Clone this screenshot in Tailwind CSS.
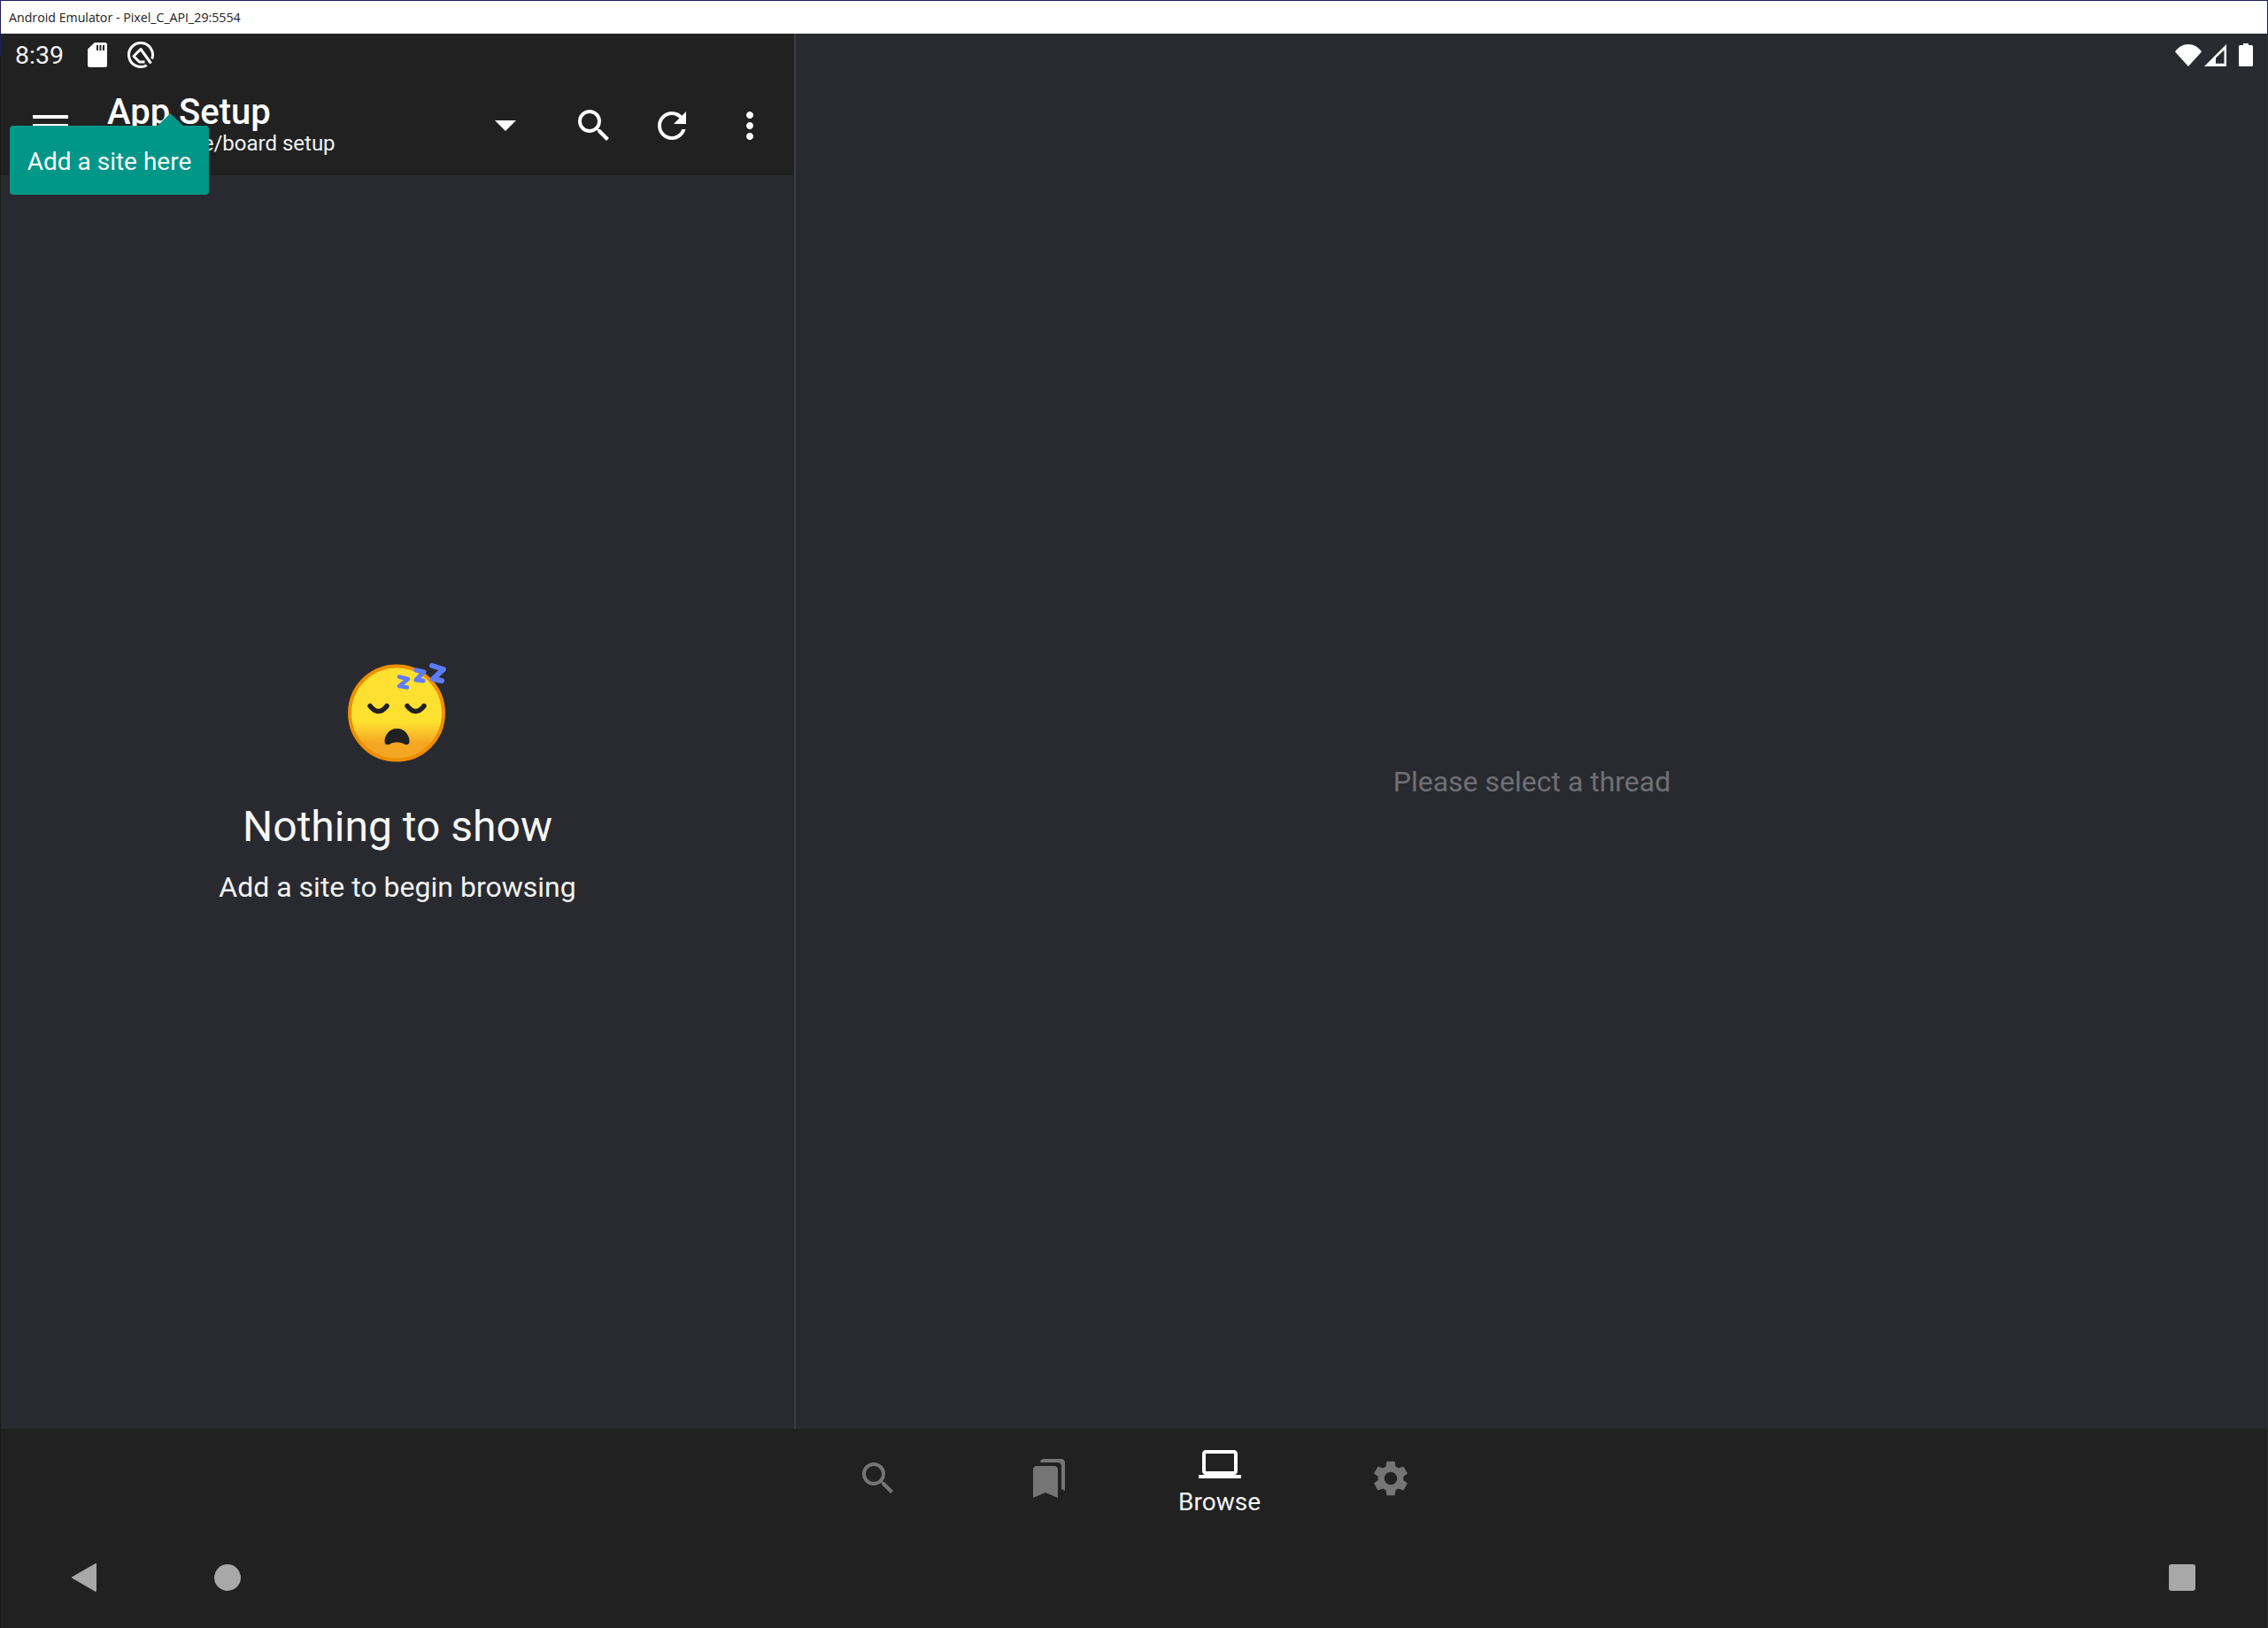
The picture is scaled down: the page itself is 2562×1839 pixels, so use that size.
<!DOCTYPE html>
<html>
<head>
<meta charset="utf-8">
<script src="https://cdn.jsdelivr.net/npm/@tailwindcss/browser@4"></script>
</head>
<body class="bg-[#292a2f] font-['Roboto',sans-serif] text-white">
<div class="relative flex h-[1839px] w-[2562px] flex-col overflow-hidden">
  <div class="flex h-[38px] shrink-0 items-center border-x border-t border-[#1f1f5c] bg-white pl-[9px] font-['Open_Sans',sans-serif] text-[14.2px] text-[#222]">Android Emulator - Pixel_C_API_29:5554</div>
  <div class="flex min-h-0 flex-1">
    <section class="flex w-[899px] shrink-0 flex-col border-r-2 border-[#3c3d41]">
      <div class="flex h-[160px] flex-col bg-[#212121]">
        <div class="flex h-[48px] items-center pl-[17px]">
          <span class="mt-[2px] w-[82px] text-[28.5px] leading-none text-[#f4f4f4]">8:39</span>
          <svg class="h-[28px] w-[22px]" viewBox="0 0 22 28"><path fill="#fff" d="M8 0h11.5A2.5 2.5 0 0 1 22 2.500V25.500A2.500 2.500 0 0 1 19.500 28H2.500A2.500 2.500 0 0 1 0 25.500V7.500zM10 3v6h2V3zm3.500 0v6h2V3zm3.500 0v6h2V3z"/></svg>
          <svg class="ml-[22px] h-[32px] w-[32px]" viewBox="0 0 32 32"><g fill="none" stroke="#fff" stroke-width="3"><path d="M22.750 27.700A13.500 13.500 0 1 1 28.700 20.600"/><path stroke-linejoin="round" d="M27.500 25.500L16 9.500L8 17.500L14.500 24H20.500"/></g></svg>
        </div>
        <div class="flex h-[112px] items-center">
          <div class="ml-[37px] flex w-[84px] flex-col gap-[6px]">
            <div class="h-[4px] w-[40px] bg-white"></div>
            <div class="h-[4px] w-[40px] bg-white"></div>
            <div class="h-[4px] w-[40px] bg-white"></div>
          </div>
          <div class="w-[438px] pb-[3px]">
            <div class="text-[40px] font-medium leading-[46px] -mt-[1px]">App Setup</div>
            <div class="-mt-[3px] text-[24px] leading-[30px] text-[#f2f2f2]">Tap for site/board setup</div>
          </div>
          <svg class="h-[12px] w-[24px]" viewBox="0 0 24 12"><path fill="#fff" d="M0 0h24L12 12z"/></svg>
          <svg class="ml-[64px] h-[48px] w-[48px]" viewBox="0 0 24 24"><path fill="#fff" d="M15.500 14h-.79l-.28-.27A6.471 6.471 0 0 0 16 9.500 6.500 6.500 0 1 0 9.500 16c1.610 0 3.090-.59 4.230-1.570l.27.28v.79l5 4.990L20.490 19l-4.990-5zm-6 0C7.010 14 5 11.990 5 9.500S7.010 5 9.500 5 14 7.010 14 9.500 11.990 14 9.500 14z"/></svg>
          <svg class="ml-[40px] h-[48px] w-[48px]" viewBox="0 0 24 24"><path fill="#fff" d="M17.650 6.350C16.200 4.900 14.210 4 12 4c-4.420 0-7.990 3.580-7.990 8s3.570 8 7.990 8c3.730 0 6.840-2.550 7.730-6h-2.080c-.82 2.330-3.040 4-5.650 4-3.310 0-6-2.690-6-6s2.690-6 6-6c1.660 0 3.140.69 4.220 1.780L13 11h7V4l-2.350 2.350z"/></svg>
          <svg class="ml-[40px] h-[48px] w-[48px]" viewBox="0 0 24 24"><path fill="#fff" d="M12 8c1.100 0 2-.9 2-2s-.9-2-2-2-2 .9-2 2 .9 2 2 2zm0 2c-1.100 0-2 .9-2 2s.9 2 2 2 2-.9 2-2-.9-2-2-2zm0 6c-1.100 0-2 .9-2 2s.9 2 2 2 2-.9 2-2-.9-2-2-2z"/></svg>
        </div>
      </div>
      <div class="flex flex-1 flex-col items-center pl-[1px] pt-[551px]">
        <svg class="h-[114px] w-[120px]" viewBox="0 0 120 114">
          <defs><linearGradient id="face" x1="0" y1="0" x2="0" y2="1"><stop offset="0.6" stop-color="#fde030"/><stop offset="0.82" stop-color="#f5a623"/></linearGradient></defs>
          <circle cx="59" cy="56.500" r="53" fill="url(#face)" stroke="#ef8f00" stroke-width="4"/>
          <g fill="none" stroke="#202020" stroke-width="5.500" stroke-linecap="round">
            <path d="M29 48.500q9.500 12 19 0"/><path d="M71 48.500q9.500 12 19 0"/>
          </g>
          <path fill="#202020" d="M59.500 74c9 0 14 8 14 14 0 5-4 5-7 3-4-2-10-2-14 0-3 2-7 2-7-3 0-6 5-14 14-14z"/>
          <g fill="none" stroke="#5c7cfa" stroke-linecap="round" stroke-linejoin="round">
            <path stroke-width="4.500" d="M62 15.500l10 2.500-10 8 9 1.500"/>
            <path stroke-width="5" d="M81 8l9 2-9 9 8 1"/>
            <path stroke-width="6" d="M99 3l13 4-12 11 10 2"/>
          </g>
        </svg>
        <div class="mt-[43px] text-[48px] leading-[56px] text-[#f6f6f6]">Nothing to show</div>
        <div class="mt-[21px] text-[32px] leading-[38px] text-[#f2f2f2]">Add a site to begin browsing</div>
      </div>
    </section>
    <section class="flex flex-1 flex-col">
      <div class="flex h-[48px] items-center justify-end pr-[17px]">
        <svg class="h-[25px] w-[30px]" viewBox="0 0 30 25"><path fill="#fff" d="M15 25L0 8.500C3.500 3.200 9 0 15 0s11.500 3.200 15 8.500z"/></svg>
        <svg class="ml-[3px] h-[25px] w-[25px]" viewBox="0 0 25 25"><path fill="#fff" fill-rule="evenodd" d="M25 0v25H0zM22.500 6.500L13 15.500V21.700h9.500z"/></svg>
        <svg class="ml-[14px] h-[26px] w-[16px]" viewBox="0 0 16 26"><path fill="#fff" d="M5 0h6v2h3.500A1.500 1.500 0 0 1 16 3.500v21a1.500 1.500 0 0 1-1.500 1.500h-13A1.500 1.500 0 0 1 0 24.500v-21A1.500 1.500 0 0 1 1.500 2H5z"/></svg>
      </div>
      <div class="flex flex-1 items-center justify-center pt-[66px] text-[32px] text-[#6f7075]">Please select a thread</div>
    </section>
  </div>
  <div class="flex h-[225px] shrink-0 flex-col bg-[#212121]">
    <nav class="flex h-[124px] justify-center">
      <div class="flex w-[193px] justify-center pt-[32px]"><svg class="h-[48px] w-[48px]" viewBox="0 0 24 24"><path fill="#757575" d="M15.500 14h-.79l-.28-.27A6.471 6.471 0 0 0 16 9.500 6.500 6.500 0 1 0 9.500 16c1.610 0 3.090-.59 4.230-1.570l.27.28v.79l5 4.990L20.490 19l-4.990-5zm-6 0C7.010 14 5 11.990 5 9.500S7.010 5 9.500 5 14 7.010 14 9.500 11.990 14 9.500 14z"/></svg></div>
      <div class="flex w-[193px] justify-center pt-[32px]"><svg class="h-[48px] w-[48px]" viewBox="0 0 24 24"><path fill="#757575" d="M19 18l2 1V3c0-1.100-.9-2-2-2H8.990C7.890 1 7 1.900 7 3h10c1.100 0 2 .9 2 2v13zM15 5H5c-1.100 0-2 .9-2 2v16l7-3 7 3V7c0-1.100-.9-2-2-2z"/></svg></div>
      <div class="flex w-[193px] flex-col items-center pt-[16px]">
        <svg class="h-[48px] w-[48px]" viewBox="0 0 24 24"><path fill="#fff" d="M20 18c1.100 0 1.990-.9 1.990-2L22 6c0-1.100-.9-2-2-2H4c-1.100 0-2 .9-2 2v10c0 1.100.9 2 2 2H0v2h24v-2h-4zM4 6h16v10H4V6z"/></svg>
        <span class="mt-[3px] text-[28px] leading-[32px] text-[#f5f5f5]">Browse</span>
      </div>
      <div class="flex w-[193px] justify-center pt-[32px]"><svg class="h-[48px] w-[48px]" viewBox="0 0 24 24"><path fill="#757575" d="M19.140 12.940c.04-.3.060-.61.060-.94 0-.32-.02-.64-.07-.94l2.030-1.580a.49.49 0 0 0 .12-.61l-1.920-3.320a.488.488 0 0 0-.59-.22l-2.390.96c-.5-.38-1.030-.7-1.620-.94l-.36-2.540a.484.484 0 0 0-.48-.41h-3.840c-.24 0-.43.170-.47.410l-.36 2.540c-.59.240-1.130.570-1.620.94l-2.390-.96c-.22-.08-.47 0-.59.220L2.740 8.870c-.12.210-.08.470.12.610l2.030 1.580c-.05.300-.09.630-.09.940s.02.640.07.940l-2.030 1.580a.49.49 0 0 0-.12.610l1.920 3.320c.12.220.37.290.59.220l2.390-.96c.5.380 1.030.7 1.620.94l.36 2.540c.05.240.24.410.48.410h3.840c.24 0 .44-.17.47-.41l.36-2.540c.59-.24 1.130-.56 1.620-.94l2.390.96c.22.080.47 0 .59-.22l1.920-3.320c.12-.22.070-.47-.12-.61l-2.010-1.580zM12 15.600c-1.980 0-3.600-1.620-3.600-3.600s1.620-3.600 3.600-3.600 3.600 1.620 3.600 3.600-1.620 3.600-3.600 3.600z"/></svg></div>
    </nav>
    <div class="flex flex-1 items-start pl-[81px] pr-[82px] pt-[28px]">
      <svg class="h-[32px] w-[28px]" viewBox="0 0 28 32"><path fill="#a8a8a8" stroke="#a8a8a8" stroke-width="2" stroke-linejoin="round" d="M27 1v30L1 16z"/></svg>
      <div class="ml-[133px] mt-[1px] h-[30px] w-[30px] rounded-full bg-[#a8a8a8]"></div>
      <div class="ml-auto mt-[1px] h-[30px] w-[30px] rounded-[3px] bg-[#a8a8a8]"></div>
    </div>
  </div>
  <div class="absolute left-0 top-[38px] h-[25px] w-px bg-[#1f1f5c]"></div>
  <div class="absolute bottom-0 left-0 top-[63px] w-px bg-[#1a1a1a]"></div>
  <div class="absolute bottom-0 right-0 top-[38px] w-px bg-[#2f2f2f]"></div>
  <div class="absolute left-[11px] top-[142px] flex h-[78px] w-[225px] items-center justify-center rounded-[4px] bg-[#009688] pt-[3px] text-[28px] text-[#f6f6f6]">
    Add a site here
    <svg class="absolute left-[167px] top-[-14px] h-[14px] w-[29px]" viewBox="0 0 29 14"><path fill="#009688" d="M14.500 0L29 14H0z"/></svg>
  </div>
</div>
</body>
</html>
